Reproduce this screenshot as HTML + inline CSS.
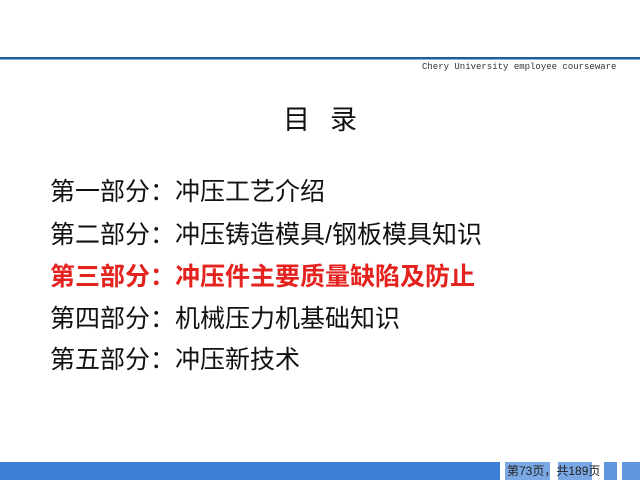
<!DOCTYPE html>
<html><head><meta charset="utf-8"><style>
body{margin:0;width:640px;height:480px;background:#fff;position:relative;overflow:hidden;font-family:"Liberation Sans","Noto Sans CJK SC",sans-serif}
.l1{position:absolute;left:0;top:57px;width:640px;height:2px;background:#1f5f95}
.l2{position:absolute;left:0;top:59px;width:640px;height:1px;background:#7fb2dc}
.hd{position:absolute;left:422px;top:62px;font-family:"Liberation Mono",monospace;font-size:9px;color:#333;white-space:nowrap}
.t{position:absolute;left:0;width:640px;top:98px;text-align:center;font-size:27px;color:#111;letter-spacing:20px;text-indent:20px}
.i{position:absolute;left:50px;font-size:25px;line-height:30px;color:#111;white-space:nowrap}
.r{color:#e4231f;font-weight:bold}
.bar{position:absolute;top:462px;height:18px;background:#3a7ed6}
.pg{position:absolute;top:462px;height:18px;font-size:12px;line-height:18px;color:#222;white-space:nowrap}
</style></head><body>
<div class="l1"></div><div class="l2"></div>
<div class="hd">Chery University employee courseware</div>
<div class="t">目录</div>
<div class="i" style="top:177px">第一部分：冲压工艺介绍</div>
<div class="i" style="top:220px">第二部分：冲压铸造模具/钢板模具知识</div>
<div class="i r" style="top:262px">第三部分：冲压件主要质量缺陷及防止</div>
<div class="i" style="top:304px">第四部分：机械压力机基础知识</div>
<div class="i" style="top:345px">第五部分：冲压新技术</div>
<div class="bar" style="left:0;width:500px"></div>
<div class="bar" style="left:505px;width:45px;background:#7aa8e4"></div>
<div class="bar" style="left:558px;width:34px;background:#7aa8e4"></div>
<div class="bar" style="left:604px;width:13px;background:#5d95de"></div>
<div class="bar" style="left:622px;width:18px;background:#5d95de"></div>
<div class="pg" style="left:507px">第73页，共189页</div>
</body></html>
